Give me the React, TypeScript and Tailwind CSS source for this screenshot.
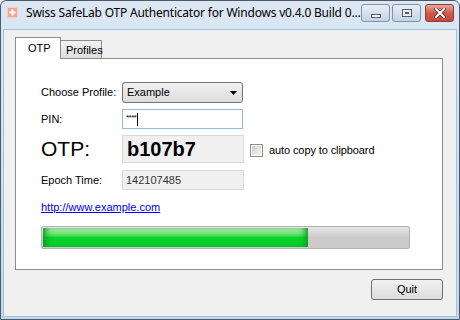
import React from "react";

const ui = { fontFamily: '"Liberation Sans", Arial, sans-serif' };
const title = { fontFamily: '"Noto Sans", "Open Sans", sans-serif' };

function CaptionButton({ kind }: { kind: "min" | "max" | "close" }) {
  if (kind === "close") {
    return (
      <div className="w-[29px] h-[18px] rounded-[3px] border border-[#8b3a35] bg-gradient-to-b from-[#e8a79b] via-[#d0594c] to-[#c7483c] flex items-center justify-center">
        <svg width="12" height="10" viewBox="0 0 12 10">
          <path d="M2 1 L10 9 M10 1 L2 9" stroke="#4a2a2a" strokeWidth="3.4" strokeLinecap="square" />
          <path d="M2 1 L10 9 M10 1 L2 9" stroke="#ffffff" strokeWidth="2" strokeLinecap="square" />
        </svg>
      </div>
    );
  }
  return (
    <div className="w-[29px] h-[18px] rounded-[3px] border border-[#7f93ad] bg-gradient-to-b from-[#e9eff7] via-[#d5e0ec] to-[#c3d3e5] flex items-center justify-center">
      {kind === "min" ? (
        <div className="w-[10px] h-[4px] border border-[#535d6a] bg-white mt-[5px]" />
      ) : (
        <div className="w-[10px] h-[8px] border border-[#535d6a] bg-[#e9eef5] flex items-center justify-center">
          <div className="w-[4px] h-[2px] border border-[#535d6a]" />
        </div>
      )}
    </div>
  );
}

export default function App() {
  return (
    <div className="w-[460px] h-[320px] bg-white">
      <div className="w-[460px] h-[320px] flex flex-col rounded-t-[6px] border border-[#4d5a69] bg-gradient-to-b from-[#dce7f3] to-[#c8d8ea] overflow-hidden">
        {/* title bar */}
        <div className="h-[28px] flex items-start shrink-0">
          <div className="mt-[6px] ml-[6px] w-[11px] h-[11px] bg-[#f4a58f] border border-[#f3d0c6] flex items-center justify-center">
            <svg width="7" height="7" viewBox="0 0 7 7">
              <path d="M3.5 0.5 V6.5 M0.5 3.5 H6.5" stroke="#ffffff" strokeWidth="2" />
            </svg>
          </div>
          <div className="ml-[8px] mt-[4px] text-[12px] leading-[16px] text-black whitespace-nowrap tracking-[-0.2px]" style={title}>
            Swiss SafeLab OTP Authenticator for Windows v0.4.0 Build 0...
          </div>
          <div className="ml-auto mr-[5px] mt-[3px] flex gap-[2px]">
            <CaptionButton kind="min" />
            <CaptionButton kind="max" />
            <div className="ml-[2px]">
              <CaptionButton kind="close" />
            </div>
          </div>
        </div>
        {/* client */}
        <div className="flex-1 mx-[2px] mb-[2px] border border-[#9cc4ea] bg-[#f0f0f0] flex flex-col" style={ui}>
          {/* tabs */}
          <div className="mt-[7px] ml-[11px] flex items-end h-[21px]">
            <div className="w-[46px] bg-white border border-b-0 border-[#898c95] text-[11px] leading-[13px] text-black pl-[12px] pt-[4px] relative z-10 -mb-px h-[22px]">
              OTP
            </div>
            <div className="w-[42px] h-[18px] -ml-px bg-gradient-to-b from-[#f2f2f2] to-[#dedede] border border-b-0 border-[#898c95] text-[11px] leading-[13px] text-black pl-[5px] pt-[3px]">
              Profiles
            </div>
          </div>
          {/* panel */}
          <div className="ml-[11px] w-[428px] h-[212px] bg-white border border-[#898c95] pl-[25px] pt-[23px] flex flex-col">
            <div className="flex items-center h-[21px]">
              <div className="w-[81px] text-[11px] text-black">Choose Profile:</div>
              <div className="w-[121px] h-[21px] rounded-[3px] border border-[#707070] bg-gradient-to-b from-[#f2f2f2] to-[#dcdcdc] flex items-center pl-[4px] pr-[5px] text-[11px] text-black">
                <span>Example</span>
                <svg className="ml-auto" width="7" height="4" viewBox="0 0 7 4">
                  <path d="M0 0 H7 L3.5 4 Z" fill="#000" />
                </svg>
              </div>
            </div>
            <div className="flex items-center h-[20px] mt-[6px]">
              <div className="w-[81px] text-[11px] text-black">PIN:</div>
              <div className="w-[121px] h-[20px] border border-[#8fbbe6] bg-white flex items-center pl-[3px] text-[8px] text-black">
                <span className="tracking-[-0.5px] -mt-[3px]">****</span>
                <div className="w-px h-[13px] bg-black ml-px" />
              </div>
            </div>
            <div className="flex items-center h-[28px] mt-[6px]">
              <div className="w-[81px] text-[21px] leading-[24px] text-black">OTP:</div>
              <div className="w-[122px] h-[28px] border border-[#d9d9d9] bg-[#f0f0f0] flex items-center pl-[4px] text-[20px] font-bold text-black">
                b107b7
              </div>
              <div className="ml-[6px] mt-[3px] w-[13px] h-[13px] border border-[#8f8f8f] bg-white p-[1px]">
                <div className="w-full h-full bg-gradient-to-br from-[#cfcfcf] to-[#f4f4f4]" />
              </div>
              <div className="ml-[6px] mt-[3px] text-[11px] text-black tracking-[-0.1px]">auto copy to clipboard</div>
            </div>
            <div className="flex items-center h-[20px] mt-[7px]">
              <div className="w-[81px] text-[11px] text-black">Epoch Time:</div>
              <div className="w-[122px] h-[20px] border border-[#d9d9d9] bg-[#f0f0f0] flex items-center pl-[3px] text-[11px] text-[#333]">
                142107485
              </div>
            </div>
            <div className="mt-[11px] h-[13px] text-[11px] leading-[13px] text-[#0000ff] underline">
              http://www.example.com
            </div>
            <div className="mt-[12px] w-[369px] h-[23px] rounded-[2px] border border-[#b2b2b2] bg-gradient-to-b from-[#e6e6e6] via-[#cbcbcb] to-[#cbcbcb] p-px flex">
              <div className="h-full w-[265px] bg-gradient-to-b from-[#b8f0c0] via-[#06d42c] to-[#06d02a] shadow-[inset_6px_0_6px_-3px_#0a9a22,inset_-6px_0_6px_-3px_#0a9a22]" />
            </div>
          </div>
          {/* footer */}
          <div className="flex justify-end mr-[13px] mt-[9px]">
            <div className="w-[72px] h-[21px] rounded-[3px] border border-[#707070] bg-gradient-to-b from-[#f2f2f2] to-[#dcdcdc] flex items-center justify-center text-[11px] text-black">
              Quit
            </div>
          </div>
        </div>
      </div>
    </div>
  );
}
